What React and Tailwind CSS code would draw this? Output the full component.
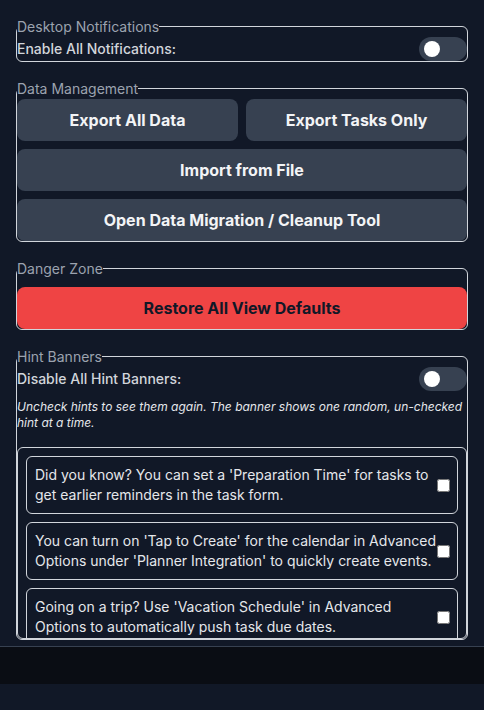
import { useState } from 'react'

const hints = [
  "Did you know? You can set a 'Preparation Time' for tasks to get earlier reminders in the task form.",
  "You can turn on 'Tap to Create' for the calendar in Advanced Options under 'Planner Integration' to quickly create events.",
  "Going on a trip? Use 'Vacation Schedule' in Advanced Options to automatically push task due dates.",
]

function Toggle({ on, onChange }) {
  return (
    <button
      onClick={() => onChange(!on)}
      className={`relative w-12 h-6 rounded-full shrink-0 ${on ? 'bg-[#3b82f6]' : 'bg-[#374151]'}`}
    >
      <span className={`absolute top-1 w-4 h-4 rounded-full bg-white ${on ? 'left-7' : 'left-[5px]'}`} />
    </button>
  )
}

function Section({ title, children }) {
  return (
    <fieldset className="border border-[#d1d5db] rounded-md">
      <legend className="text-sm leading-[21px] text-[#9ca3af]">{title}</legend>
      {children}
    </fieldset>
  )
}

const btn = 'rounded-lg bg-[#374151] text-[#f3f4f6] font-bold text-base leading-6 py-[9px]'

export default function App() {
  const [notify, setNotify] = useState(false)
  const [hideHints, setHideHints] = useState(false)

  return (
    <div className="h-screen flex flex-col bg-[#111827] font-['Inter',sans-serif]">
      <main className="h-[646px] shrink-0 overflow-hidden px-4 pt-4 space-y-4">
        {/* Notifications */}
        <Section title="Desktop Notifications">
          <div className="flex items-center justify-between">
            <span className="text-sm font-medium text-[#d1d5db]">Enable All Notifications:</span>
            <Toggle on={notify} onChange={setNotify} />
          </div>
        </Section>

        {/* Data */}
        <Section title="Data Management">
          <div className="grid grid-cols-2 gap-2">
            <button className={btn}>Export All Data</button>
            <button className={btn}>Export Tasks Only</button>
            <button className={`${btn} col-span-2`}>Import from File</button>
            <button className={`${btn} col-span-2`}>Open Data Migration / Cleanup Tool</button>
          </div>
        </Section>

        <Section title="Danger Zone">
          <button className="mt-2 w-full rounded-lg bg-[#ef4444] text-[#111827] font-bold text-base leading-6 py-[9px]">
            Restore All View Defaults
          </button>
        </Section>

        {/* Hints */}
        <Section title="Hint Banners">
          <div className="flex items-center justify-between">
            <span className="text-sm font-medium text-[#d1d5db]">Disable All Hint Banners:</span>
            <Toggle on={hideHints} onChange={setHideHints} />
          </div>
          <p className="mt-2 text-xs leading-4 italic text-[#e5e7eb]">
            Uncheck hints to see them again. The banner shows one random, un-checked hint at a time.
          </p>
          <div className="mt-4 max-h-48 overflow-hidden border border-[#d1d5db] rounded-md p-2 space-y-2">
            {hints.map((h, i) => (
              <label key={i} className="flex items-center border border-[#d1d5db] rounded-md pl-2 pr-[7px] py-2">
                <span className="flex-1 text-sm leading-5 text-[#e5e7eb]">{h}</span>
                <input type="checkbox" className="shrink-0 m-0 w-[13px] h-[13px]" />
              </label>
            ))}
          </div>
        </Section>
      </main>
      <footer className="h-[38px] shrink-0 border-t border-[#374151] bg-[#0a0d14]" />
      <div className="flex-1" />
    </div>
  )
}
